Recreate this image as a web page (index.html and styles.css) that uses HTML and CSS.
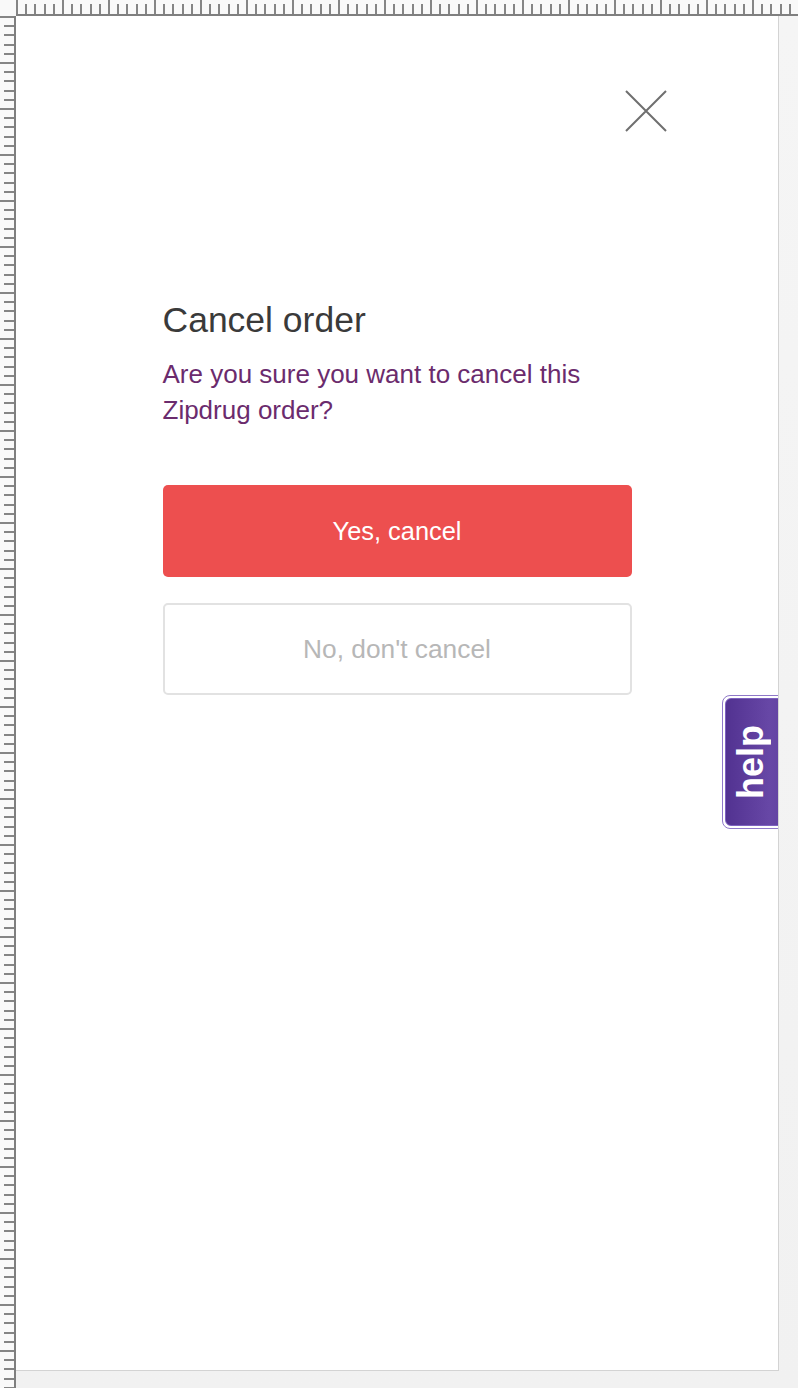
FILE: index.html
```html
<!DOCTYPE html>
<html lang="en">
<head>
<meta charset="utf-8">
<title>Cancel order</title>
<link rel="stylesheet" href="styles.css">
</head>
<body>
<div class="canvas">
  <div class="corner"></div>
  <div class="ruler ruler-top"></div>
  <div class="ruler ruler-left"></div>
  <div class="workspace">
    <div class="artboard">
      <div class="topbar">
        <button class="close" aria-label="Close">
          <svg width="42" height="42" viewBox="0 0 42 42">
            <path d="M1 1 L41 41 M41 1 L1 41" stroke="#6f6f6f" stroke-width="2" fill="none"/>
          </svg>
        </button>
      </div>
      <div class="content">
        <h1 class="title">Cancel order</h1>
        <p class="question">Are you sure you want to cancel this Zipdrug order?</p>
        <div class="actions">
          <button class="btn btn-danger">Yes, cancel</button>
          <button class="btn btn-ghost">No, don't cancel</button>
        </div>
      </div>
      <div class="help">
        <div class="help-inner"><span class="help-text">help</span></div>
      </div>
    </div>
  </div>
</div>
</body>
</html>
```

FILE: styles.css
```css
* { box-sizing: border-box; }
html, body { margin: 0; padding: 0; }
body {
  width: 798px;
  height: 1388px;
  overflow: hidden;
  font-family: "Liberation Sans", Arial, sans-serif;
  background: #f4f4f4;
}
.canvas {
  display: grid;
  grid-template-columns: 16px 1fr;
  grid-template-rows: 16px 1fr;
  height: 1388px;
}
.corner {
  background: #f9f9f9;
}
.ruler { background-color: #f9f9f9; }
.ruler-top {
  border-bottom: 2px solid #7f7f7f;
  background-image:
    repeating-linear-gradient(90deg, #858585 0 2px, transparent 2px 46px),
    repeating-linear-gradient(90deg, #858585 0 2px, transparent 2px 9.2px);
  background-size: 100% 14px, 100% 10px;
  background-position: 0 0, 0 4px;
  background-repeat: no-repeat;
}
.ruler-left {
  border-right: 2px solid #7f7f7f;
  background-image:
    repeating-linear-gradient(180deg, #858585 0 2px, transparent 2px 46px),
    repeating-linear-gradient(180deg, #858585 0 2px, transparent 2px 9.2px);
  background-size: 14px 100%, 10px 100%;
  background-position: 0 0, 4px 0;
  background-repeat: no-repeat;
}
.workspace {
  background: linear-gradient(180deg, #f5f5f5, #f1f1f1);
  overflow: hidden;
}
.artboard {
  position: relative;
  width: 763px;
  height: 1355px;
  background: #fff;
  border-right: 1px solid #d3d3d3;
  border-bottom: 1px solid #d3d3d3;
  overflow: hidden;
}
.topbar {
  display: flex;
  justify-content: flex-end;
  padding: 74px 111px 0 0;
}
.close {
  width: 42px;
  height: 42px;
  padding: 0;
  border: 0;
  background: none;
  display: block;
}
.close svg { display: block; }
.content {
  width: 469px;
  margin: 0 auto;
  padding-top: 168px;
}
.title {
  margin: 0;
  font-weight: 400;
  font-size: 35.5px;
  line-height: 40px;
  color: #3a3a3a;
}
.question {
  margin: 16px 0 0;
  font-size: 26px;
  line-height: 36px;
  color: #6b2b6d;
}
.actions {
  display: flex;
  flex-direction: column;
  gap: 26px;
  margin-top: 57px;
}
.btn {
  height: 92px;
  width: 100%;
  font-family: "Liberation Sans", Arial, sans-serif;
  font-size: 25.4px;
  border-radius: 5px;
  padding: 0;
}
.btn-danger {
  background: #ed4f4f;
  border: 0;
  color: #fff;
}
.btn-ghost {
  background: #fff;
  border: 2px solid #e2e2e2;
  color: #b7b7b7;
  font-size: 26.3px;
}
.help {
  position: absolute;
  left: 706px;
  top: 679px;
  width: 80px;
  height: 134px;
  border: 1px solid #8f78c8;
  border-radius: 8px;
  padding: 2px;
  background: #fff;
}
.help-inner {
  height: 100%;
  border: 1px solid #7d62bf;
  border-radius: 6px;
  background: linear-gradient(90deg, #523291, #6747a6 60%, #5e3e9e);
  display: flex;
  align-items: center;
  padding-left: 7px;
}
.help-text {
  writing-mode: vertical-rl;
  transform: rotate(180deg);
  font-weight: 700;
  font-size: 36px;
  line-height: 35px;
  color: #fff;
}
```
